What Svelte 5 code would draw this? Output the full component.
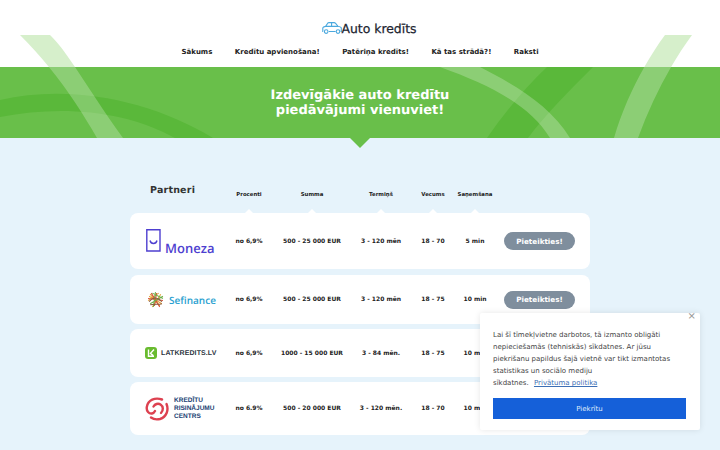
<script>
  const cols = ['Procenti', 'Summa', 'Termiņš', 'Vecums', 'Saņemšana'];
  const rows = [
    { id: 'moneza', h: 'r1', v: ['no 6,9%', '500 - 25 000 EUR', '3 - 120 mēn', '18 - 70', '5 min'] },
    { id: 'sefinance', h: 'r2', v: ['no 6,9%', '500 - 25 000 EUR', '3 - 120 mēn', '18 - 75', '10 min'] },
    { id: 'latkredits', h: 'r3', v: ['no 6,9%', '1000 - 15 000 EUR', '3 - 84 mēn.', '18 - 75', '10 min'] },
    { id: 'krc', h: 'r4', v: ['no 6.9%', '500 - 20 000 EUR', '3 - 120 mēn.', '18 - 70', '10 min'] }
  ];
  const nav = ['Sākums', 'Kredītu apvienošana!', 'Patēriņa kredīts!', 'Kā tas strādā?!', 'Raksti'];
  const bandL = 'M20 35H50C68 52 85 85 123 138H97C78 105 55 70 20 35Z';
  const bandR = 'M665 35H692C670 65 652 100 638 138H614C625 100 645 62 665 35Z';
</script>

<div class="page">
  <header class="top">
    <svg class="deco" viewBox="0 0 720 67" aria-hidden="true">
      <path d={bandL} /><path d={bandR} />
    </svg>
    <div class="brand">
      <svg class="car" viewBox="0 0 20 12" aria-hidden="true">
        <path d="M1 9.5H.8V5.8C1 5 2.5 4.6 3.6 4.4L5.7 1.2C6 .8 6.5.6 7 .6H12.2C12.8.6 13.2.9 13.6 1.3L16 4.3C17.5 4.6 19.2 5 19.3 6V9.5H18.6" />
        <path d="M6.8 9.5H13.6M4 4.4H16M9.6.7V4.4" />
        <circle cx="4.2" cy="9.6" r="1.8" /><circle cx="16" cy="9.6" r="1.8" />
      </svg>
      <span>Auto kredīts</span>
    </div>
    <nav>
      {#each nav as item}<a href="#top">{item}</a>{/each}
    </nav>
  </header>

  <section class="hero">
    <svg class="art" viewBox="0 67 720 71" aria-hidden="true">
      <path class="dark" d="M0 100C70 84 150 100 213 138H175C125 110 60 105 0 117Z" />
      <path class="dark" d="M547 67H593C570 90 545 115 528 138H487C505 112 525 88 547 67Z" />
      <path class="light" d="M440 67H480C515 85 550 105 570 138H550C530 105 490 85 440 67Z" />
      <path class="light" d={bandL} /><path class="light" d={bandR} />
    </svg>
    <h1>Izdevīgākie auto kredītu<br />piedāvājumi vienuviet!</h1>
    <span class="arrow"></span>
  </section>

  <main class="content">
    <div class="table">
      <div class="head">
        <h2>Partneri</h2>
        {#each cols as c}<div class="col"><span>{c}</span><i></i></div>{/each}
      </div>
      {#each rows as r}
        <div class="row {r.h}">
          <div class="logo">
            {#if r.id === 'moneza'}
              <svg class="mz" viewBox="0 0 15 23" aria-hidden="true">
                <path d="M.8.8H14V22H.8Z" /><path d="M4 11.5C5 15.5 10 15.5 11 11.5" />
              </svg>
              <span class="mz-t">Moneza</span>
            {:else if r.id === 'sefinance'}
              <svg class="sf" viewBox="0 0 16 16" aria-hidden="true">
                <path stroke="#e2a33a" d="M2 5L14 12M1 9L11 2M5 15L13 3M3 3L12 14" />
                <path stroke="#d8503a" d="M4 2L12 15M1 7L15 9M9 2L7 14" />
                <path stroke="#6fae4a" d="M8 1L6 15M3 12L15 5M5 2L15 7" />
                <path stroke="#8a5a3c" d="M2 10C6 5 10 6 14 10M3 13C7 12 11 13 14 12" />
              </svg>
              <span class="sf-t">Sefinance</span>
            {:else if r.id === 'latkredits'}
              <span class="lk"><svg viewBox="0 0 12 12" aria-hidden="true"><path d="M3.5 2.5V9.3H9M9 2.5L5.5 6.4L8.2 8.6" /></svg></span>
              <span class="lk-t">LATKREDITS.LV</span>
            {:else}
              <svg class="krc" viewBox="0 0 24 24" aria-hidden="true">
                <path d="M17 2.5C10 0 3 3 1.8 10C1.2 14 4 17 7 16.5C8.5 16.2 9.5 15 10 14" />
                <path d="M8.5 9.5C10 7 13 6 15.5 7.5C18.5 9.5 18.5 13.5 16 16" />
                <path d="M21.5 7C24 13 21.5 20 15 22C11 23 8 22 6 20.5" />
              </svg>
              <span class="krc-t">KREDĪTU<br />RISINĀJUMU<br />CENTRS</span>
            {/if}
          </div>
          {#each r.v as val}<div class="val">{val}</div>{/each}
          <div class="act"><button>Pieteikties!</button></div>
        </div>
      {/each}
    </div>
  </main>

  <aside class="cookie">
    <span class="x">×</span>
    <p>Lai šī tīmekļvietne darbotos, tā izmanto obligāti<br />nepieciešamās (tehniskās) sīkdatnes. Ar jūsu<br />piekrišanu papildus šajā vietnē var tikt izmantotas<br />statistikas un sociālo mediju<br />sīkdatnes. <a href="#top">Privātuma politika</a></p>
    <button>Piekrītu</button>
  </aside>
</div>

<style>
  :global(body) { margin: 0; background: #e6f3fb; }
  .page { position: relative; height: 450px; overflow: hidden; font-family: "DejaVu Sans", sans-serif; color: #222; text-rendering: geometricPrecision; }
  .top { position: relative; height: 67px; background: #fff; box-sizing: border-box; padding-top: 19px; }
  .deco { position: absolute; left: 0; top: 0; width: 720px; height: 67px; }
  .deco path { fill: #d6efcb; }
  .brand { position: relative; display: flex; justify-content: center; align-items: center; height: 18px; padding-left: 18px; font-size: 12.4px; font-weight: 400; color: #1c2430; -webkit-text-stroke: .25px #1c2430; }
  .car { width: 20px; height: 12px; margin-top: -1px; }
  .car path, .car circle { fill: none; stroke: #4aa8de; stroke-width: 1.1; }
  nav { position: relative; display: flex; justify-content: center; gap: 22.5px; margin-top: 8px; }
  nav a { font-size: 7px; line-height: 14px; font-weight: 700; color: #222; text-decoration: none; }
  .hero { position: relative; height: 71px; background: #69bf4a; display: flex; justify-content: center; }
  .art { position: absolute; left: 0; top: 0; width: 720px; height: 71px; }
  .dark { fill: #5ab83a; }
  .light { fill: rgba(255, 255, 255, .24); }
  h1 { position: relative; margin: 21px 0 0; font-size: 13px; line-height: 15px; font-weight: 700; color: #fff; text-align: center; }
  .arrow { position: absolute; left: 350px; top: 71px; border: 10px solid transparent; border-top-color: #69bf4a; border-bottom: 0; }
  .content { padding: 0 130px; }
  .table { width: 460px; }
  .head, .row { display: grid; grid-template-columns: 92px 54px 72px 66px 38px 46px 92px; align-items: center; }
  .head { height: 75px; align-items: start; }
  h2 { margin: 47px 0 0 20px; font-size: 9.5px; line-height: 11px; font-weight: 700; color: #333; letter-spacing: .2px; }
  .col { position: relative; height: 75px; display: flex; justify-content: center; }
  .col span { margin-top: 53px; font-size: 5.4px; line-height: 8px; font-weight: 700; color: #222; white-space: nowrap; }
  .col i { position: absolute; left: 50%; bottom: 0; margin-left: -4px; border: 4px solid transparent; border-bottom-color: #fff; border-top: 0; }
  .row { background: #fff; border-radius: 8px; margin-bottom: 5px; }
  .r1 { height: 56px; margin-bottom: 6px; }
  .r2 { height: 49px; }
  .r3 { height: 48px; }
  .r4 { height: 53px; }
  .val { font-size: 6px; font-weight: 700; color: #222; text-align: center; white-space: nowrap; }
  .act { display: flex; justify-content: flex-end; padding-right: 15px; }
  .act button { width: 71px; height: 18px; padding: 0; border: 0; border-radius: 9px; background: #7f8e9d; color: #fff; font: 700 7.2px "DejaVu Sans", sans-serif; text-rendering: geometricPrecision; }
  .logo { display: flex; align-items: center; height: 100%; padding-left: 16px; box-sizing: border-box; }
  .mz { width: 15px; height: 23px; margin-right: 4px; margin-top: -2px; }
  .mz path { fill: none; stroke: #4e3fd0; stroke-width: 1.4; }
  .mz-t { font: 600 13px "Open Sans", sans-serif; color: #4e3fd0; margin-top: 13px; }
  .sf { width: 17px; height: 17px; margin: 0 5px 0 1px; }
  .sf path { fill: none; stroke-width: 1; }
  .sf-t { font: 600 10px "Open Sans", sans-serif; color: #2a9fd0; }
  .lk { width: 12px; height: 12px; border-radius: 3px; background: #69bb2f; display: flex; margin-right: 4px; margin-left: -1px; }
  .lk svg { width: 12px; height: 12px; }
  .lk path { fill: none; stroke: #fff; stroke-width: 1.4; }
  .lk-t { font: 700 7px "Liberation Sans", sans-serif; color: #2b3440; letter-spacing: .1px; }
  .krc { width: 24px; height: 24px; margin-right: 5px; margin-left: -1px; }
  .krc path { fill: none; stroke: #dd4150; stroke-width: 2.4; stroke-linecap: round; }
  .krc-t { font: 700 6.5px/8px "Liberation Sans", "DejaVu Sans", sans-serif; color: #223f73; }
  .cookie { position: absolute; left: 480px; top: 313px; width: 220px; height: 117px; box-sizing: border-box; padding: 16px 14px 0 13px; background: #fff; border-radius: 2px; box-shadow: 0 0 6px rgba(0, 0, 0, .1); }
  .cookie p { margin: 0; font-size: 7px; line-height: 12px; color: #444; }
  .cookie a { margin-left: 3px; color: #3d6fb5; }
  .cookie button { display: block; width: 193px; height: 21px; margin-top: 9px; padding: 0; border: 0; background: #1560d9; color: #dfe9fa; font: 400 7px "DejaVu Sans", sans-serif; text-rendering: geometricPrecision; }
  .x { position: absolute; right: 4px; top: -1px; font-size: 10px; line-height: 10px; color: #999; }
</style>
